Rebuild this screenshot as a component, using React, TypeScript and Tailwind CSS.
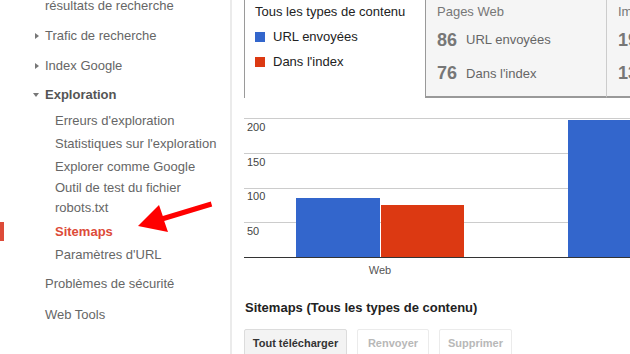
import React from 'react';

const font = { fontFamily: '"Liberation Sans", Arial, sans-serif' };

function RightTri() {
  return (
    <span className="w-[10px] flex items-center">
      <span className="block w-0 h-0 border-y-[3.5px] border-y-transparent border-l-[4px] border-l-[#777]" />
    </span>
  );
}

function DownTri() {
  return (
    <span className="w-[12px] flex items-center -ml-[2px]">
      <span className="block w-0 h-0 border-x-[3.5px] border-x-transparent border-t-[4px] border-t-[#777]" />
    </span>
  );
}

const subItems = ['Erreurs d\'exploration', 'Statistiques sur l\'exploration', 'Explorer comme Google'];

function Sidebar() {
  return (
    <div className="w-[232px] shrink-0 border-r-2 border-[#ebebeb] text-[13px] text-[#666] h-[354px] overflow-hidden">
      <div className="-mt-[9px] h-[30px] pl-[45px] flex items-center">résultats de recherche</div>
      <div className="h-[30px] pl-[35px] flex items-center">
        <RightTri />
        <span>Trafic de recherche</span>
      </div>
      <div className="h-[29px] pl-[35px] flex items-center">
        <RightTri />
        <span>Index Google</span>
      </div>
      <div className="h-[29px] pl-[35px] flex items-center font-bold text-[#555]">
        <DownTri />
        <span>Exploration</span>
      </div>
      {subItems.map((s) => (
        <div key={s} className="h-[23px] pl-[55px] flex items-center">{s}</div>
      ))}
      <div className="h-[40px] pl-[55px] leading-[20px]">
        Outil de test du fichier
        <br />
        robots.txt
      </div>
      <div className="mt-[4px] mb-[3px] h-[19px] border-l-4 border-[#dd4b39] pl-[51px] flex items-center font-bold text-[#dd4b39]">
        Sitemaps
      </div>
      <div className="h-[21px] pl-[55px] flex items-center">Paramètres d'URL</div>
      <div className="h-[38px] pl-[45px] flex items-center">Problèmes de sécurité</div>
      <div className="h-[24px] pl-[45px] flex items-center">Web Tools</div>
    </div>
  );
}

function Legend() {
  return (
    <div className="w-[181px] shrink-0 h-[98px] border-l border-[#9a9a9a] pl-[10px] text-[13px] text-[#222]">
      <div className="h-[24px] flex items-center">Tous les types de contenu</div>
      <div className="h-[25px] flex items-center gap-[8px]">
        <span className="w-[10px] h-[10px] bg-[#3366cc]" />
        <span>URL envoyées</span>
      </div>
      <div className="h-[25px] flex items-center gap-[8px]">
        <span className="w-[10px] h-[10px] bg-[#dc3912]" />
        <span>Dans l'index</span>
      </div>
    </div>
  );
}

function StatBox({ title, a, b, last }: { title: string; a: string; b: string; last?: boolean }) {
  return (
    <div
      className={
        'w-[181px] shrink-0 h-[98px] bg-[#f5f5f5] border-b-2 border-[#999] pl-[11px] text-[13px] text-[#777] ' +
        (last ? 'border-l border-l-[#ccc]' : 'border-l border-l-[#999]')
      }
    >
      <div className="h-[23px] flex items-center">{title}</div>
      <div className="h-[34px] flex items-center gap-[9px]">
        <span className="text-[18px] font-bold text-[#777]">{a}</span>
        <span className="text-[#666]">URL envoyées</span>
      </div>
      <div className="h-[33px] flex items-center gap-[9px]">
        <span className="text-[18px] font-bold text-[#777]">{b}</span>
        <span className="text-[#666]">Dans l'index</span>
      </div>
    </div>
  );
}

function Chart() {
  const grid = [20, 55, 90, 124];
  const labels = [
    { t: '200', y: 33 },
    { t: '150', y: 68 },
    { t: '100', y: 102 },
    { t: '50', y: 137 },
  ];
  return (
    <svg width="386" height="185" className="block" style={font}>
      {grid.map((y) => (
        <line key={y} x1="0" x2="386" y1={y + 0.5} y2={y + 0.5} stroke="#cccccc" strokeWidth="1" />
      ))}
      {labels.map((l) => (
        <text key={l.t} x="3" y={l.y} fontSize="11" fill="#444">
          {l.t}
        </text>
      ))}
      <rect x="52" y="100" width="84" height="59" fill="#3366cc" />
      <rect x="137" y="107" width="83" height="52" fill="#dc3912" />
      <rect x="324" y="22" width="62" height="137" fill="#3366cc" />
      <line x1="0" x2="386" y1="159.5" y2="159.5" stroke="#333" strokeWidth="1.2" />
      <text x="136" y="176" fontSize="11" fill="#555" textAnchor="middle">
        Web
      </text>
    </svg>
  );
}

function Arrow() {
  return (
    <svg
      className="absolute left-[130px] top-[195px] pointer-events-none"
      width="90"
      height="45"
      viewBox="130 195 90 45"
    >
      <polygon
        points="210.8,201.6 212.2,206.4 164.2,220.9 168,232 138,226 159,205 162.8,216.1"
        fill="#ff0000"
      />
    </svg>
  );
}

export default function App() {
  return (
    <div className="relative w-[630px] h-[354px] overflow-hidden bg-white flex" style={font}>
      <Sidebar />
      <div className="flex-1 min-w-0 pl-[12px] overflow-hidden">
        <div className="flex">
          <Legend />
          <StatBox title="Pages Web" a="86" b="76" />
          <StatBox title="Images" a="197" b="135" last />
        </div>
        <Chart />
        <div className="mt-[15px] h-[20px] leading-[20px] text-[13px] font-bold text-[#222] pl-[1px]">
          Sitemaps (Tous les types de contenu)
        </div>
        <div className="mt-[11px] flex gap-[10px]">
          <button className="h-[29px] w-[103px] bg-[#f3f3f3] border border-[#dcdcdc] rounded-[2px] text-[11px] font-bold text-[#333]">
            Tout télécharger
          </button>
          <button className="h-[29px] w-[72px] bg-white border border-[#ebebeb] rounded-[2px] text-[11px] font-bold text-[#b8b8b8]">
            Renvoyer
          </button>
          <button className="h-[29px] w-[73px] bg-white border border-[#ebebeb] rounded-[2px] text-[11px] font-bold text-[#b8b8b8]">
            Supprimer
          </button>
        </div>
      </div>
      <Arrow />
    </div>
  );
}
